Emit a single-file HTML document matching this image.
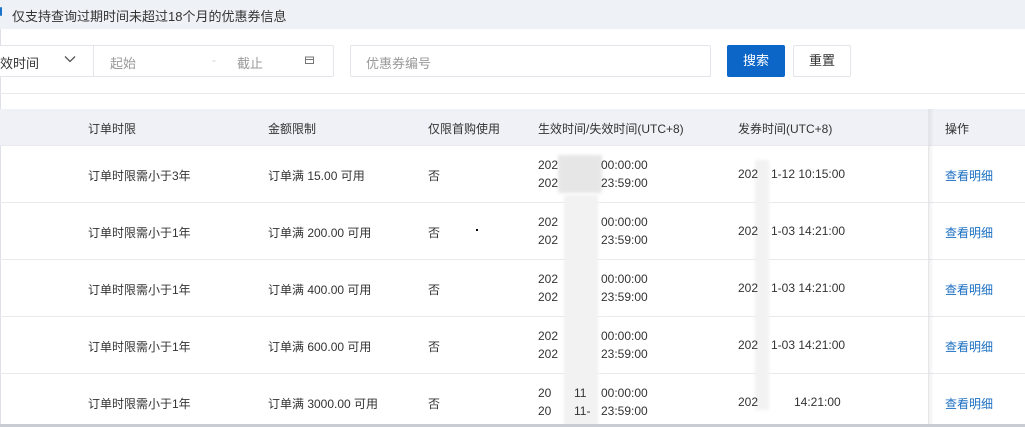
<!DOCTYPE html>
<html><head><meta charset="utf-8"><style>
*{margin:0;padding:0;box-sizing:border-box}
body{width:1025px;height:427px;overflow:hidden;background:#fff;font-family:"Liberation Sans","Noto Sans CJK SC",sans-serif;color:#333;font-size:12px;position:relative}
.a{position:absolute;white-space:nowrap}
.banner{left:0;top:0;width:1025px;height:29px;background:#eef1f6}
.box{border:1px solid #e3e5ea;border-radius:2px;background:#fff}
.ph{color:#999;font-size:13px}
.hdr{left:0;top:109px;width:1025px;height:37px;background:#eff1f6}
.hl{left:0;width:1025px;height:1px;background:#e8eaee}
.blur{position:absolute;background:#f2f2f2;filter:blur(1.5px)}
.link{color:#1b6fc2}
</style></head><body>
<div class="a banner"></div>
<div class="a" style="left:0;top:7px;width:2px;height:9px;background:#1a73c9;border-radius:1px"></div>
<div class="a" style="left:12px;top:6px;font-size:13px;color:#333">仅支持查询过期时间未超过18个月的优惠券信息</div>
<div class="a" style="left:0;top:29px;width:1px;height:398px;background:#dde0e6"></div>

<div class="a box" style="left:-5px;top:45px;width:339px;height:32px"></div>
<div class="a" style="left:93px;top:46px;width:1px;height:30px;background:#e3e5ea"></div>
<div class="a" style="left:0;top:53px;font-size:13px;color:#333">效时间</div>
<svg class="a" style="left:64px;top:55px" width="12" height="8" viewBox="0 0 12 8"><path d="M1 1.5L6 6.5L11 1.5" fill="none" stroke="#555" stroke-width="1.3"/></svg>
<div class="a ph" style="left:110px;top:53px">起始</div>
<div class="a" style="left:212px;top:53px;color:#ccc">-</div>
<div class="a ph" style="left:237px;top:53px">截止</div>
<svg class="a" style="left:305px;top:56px" width="9" height="8" viewBox="0 0 9 8"><rect x="0.5" y="1" width="8" height="6.5" fill="none" stroke="#777"/><line x1="0.5" y1="3.5" x2="8.5" y2="3.5" stroke="#777"/></svg>
<div class="a box" style="left:350px;top:45px;width:361px;height:32px"></div>
<div class="a ph" style="left:366px;top:53px">优惠券编号</div>
<div class="a" style="left:727px;top:45px;width:58px;height:32px;background:#0b66c8;border-radius:2px;color:#fff;font-size:13px;text-align:center;line-height:32px">搜索</div>
<div class="a box" style="left:793px;top:45px;width:58px;height:32px;font-size:13px;text-align:center;line-height:30px;color:#333">重置</div>
<div class="a hl" style="top:93px"></div>

<div class="a hdr"></div>
<div class="a" style="left:88px;top:120px">订单时限</div>
<div class="a" style="left:268px;top:120px">金额限制</div>
<div class="a" style="left:428px;top:120px">仅限首购使用</div>
<div class="a" style="left:538px;top:120px">生效时间/失效时间(UTC+8)</div>
<div class="a" style="left:738px;top:120px">发券时间(UTC+8)</div>

<div class="a hl" style="top:145px"></div>
<div class="a hl" style="top:202px"></div>
<div class="a hl" style="top:259px"></div>
<div class="a hl" style="top:316px"></div>
<div class="a hl" style="top:373px"></div>

<!-- blurred masks -->
<div class="blur" style="left:558px;top:155px;width:44px;height:38px;background:#e6e6e6"></div>
<div class="blur" style="left:564px;top:195px;width:34px;height:232px"></div>
<div class="blur" style="left:755px;top:160px;width:14px;height:250px"></div>

<!-- rows -->
<div class="a" style="left:88px;top:167px">订单时限需小于3年</div>
<div class="a" style="left:268px;top:167px">订单满 15.00 可用</div>
<div class="a" style="left:428px;top:167px">否</div>
<div class="a" style="left:538px;top:158px">202</div><div class="a" style="left:601px;top:158px">00:00:00</div>
<div class="a" style="left:538px;top:176px">202</div><div class="a" style="left:601px;top:176px">23:59:00</div>
<div class="a" style="left:738px;top:167px">202</div><div class="a" style="left:771px;top:167px">1-12 10:15:00</div>
<div class="a link" style="left:945px;top:167px">查看明细</div>

<div class="a" style="left:88px;top:224px">订单时限需小于1年</div>
<div class="a" style="left:268px;top:224px">订单满 200.00 可用</div>
<div class="a" style="left:428px;top:224px">否</div>
<div class="a" style="left:476px;top:229px;width:2px;height:2px;background:#000"></div>
<div class="a" style="left:538px;top:215px">202</div><div class="a" style="left:601px;top:215px">00:00:00</div>
<div class="a" style="left:538px;top:233px">202</div><div class="a" style="left:601px;top:233px">23:59:00</div>
<div class="a" style="left:738px;top:224px">202</div><div class="a" style="left:771px;top:224px">1-03 14:21:00</div>
<div class="a link" style="left:945px;top:224px">查看明细</div>

<div class="a" style="left:88px;top:281px">订单时限需小于1年</div>
<div class="a" style="left:268px;top:281px">订单满 400.00 可用</div>
<div class="a" style="left:428px;top:281px">否</div>
<div class="a" style="left:538px;top:272px">202</div><div class="a" style="left:601px;top:272px">00:00:00</div>
<div class="a" style="left:538px;top:290px">202</div><div class="a" style="left:601px;top:290px">23:59:00</div>
<div class="a" style="left:738px;top:281px">202</div><div class="a" style="left:771px;top:281px">1-03 14:21:00</div>
<div class="a link" style="left:945px;top:281px">查看明细</div>

<div class="a" style="left:88px;top:338px">订单时限需小于1年</div>
<div class="a" style="left:268px;top:338px">订单满 600.00 可用</div>
<div class="a" style="left:428px;top:338px">否</div>
<div class="a" style="left:538px;top:329px">202</div><div class="a" style="left:601px;top:329px">00:00:00</div>
<div class="a" style="left:538px;top:347px">202</div><div class="a" style="left:601px;top:347px">23:59:00</div>
<div class="a" style="left:738px;top:338px">202</div><div class="a" style="left:771px;top:338px">1-03 14:21:00</div>
<div class="a link" style="left:945px;top:338px">查看明细</div>

<div class="a" style="left:88px;top:395px">订单时限需小于1年</div>
<div class="a" style="left:268px;top:395px">订单满 3000.00 可用</div>
<div class="a" style="left:428px;top:395px">否</div>
<div class="a" style="left:538px;top:386px">20</div><div class="a" style="left:574px;top:386px">11</div><div class="a" style="left:601px;top:386px">00:00:00</div>
<div class="a" style="left:538px;top:404px">20</div><div class="a" style="left:574px;top:404px">11-</div><div class="a" style="left:601px;top:404px">23:59:00</div>
<div class="a" style="left:738px;top:395px">202</div><div class="a" style="left:794px;top:395px">14:21:00</div>
<div class="a link" style="left:945px;top:395px">查看明细</div>

<div class="a" style="left:928px;top:109px;width:6px;height:318px;background:linear-gradient(90deg,rgba(0,0,0,0.07),rgba(0,0,0,0))"></div>
<div class="a" style="left:928px;top:109px;width:1px;height:318px;background:#e4e6ea"></div>
<div class="a" style="left:945px;top:120px">操作</div>
<div class="a" style="left:0;top:424px;width:1025px;height:3px;background:#c9ccd2"></div>
</body></html>
